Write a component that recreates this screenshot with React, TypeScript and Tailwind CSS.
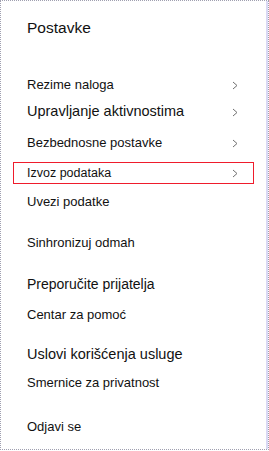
import React from 'react';

interface Item {
    label: string;
    size: string;
    mt: string;
    chevron?: boolean;
    selected?: boolean;
}

const items: Item[] = [
    { label: 'Rezime naloga', size: 'text-[13px]', mt: 'mt-[0px]', chevron: true },
    { label: 'Upravljanje aktivnostima', size: 'text-[14.5px]', mt: 'mt-[5px]', chevron: true },
    { label: 'Bezbednosne postavke', size: 'text-[13px]', mt: 'mt-[9px]', chevron: true },
    { label: 'Izvoz podataka', size: 'text-[12.5px]', mt: 'mt-[8px]', chevron: true, selected: true },
    { label: 'Uvezi podatke', size: 'text-[13px]', mt: 'mt-[7px]' },
    { label: 'Sinhronizuj odmah', size: 'text-[13px]', mt: 'mt-[19px]' },
    { label: 'Preporučite prijatelja', size: 'text-[14px]', mt: 'mt-[19px]' },
    { label: 'Centar za pomoć', size: 'text-[13px]', mt: 'mt-[9px]' },
    { label: 'Uslovi korišćenja usluge', size: 'text-[14.5px]', mt: 'mt-[18px]' },
    { label: 'Smernice za privatnost', size: 'text-[13px]', mt: 'mt-[6px]' },
    { label: 'Odjavi se', size: 'text-[13px]', mt: 'mt-[22px]' },
];

function Chevron() {
    return (
        <svg width="6" height="9" viewBox="0 0 6 9" fill="none">
            <path d="M1 1 L5 4.5 L1 8" stroke="#707070" strokeWidth="1" />
        </svg>
    );
}

export default function App() {
    return (
        <div
            className="w-[269px] h-[451px] bg-white"
            style={{ fontFamily: '"Liberation Sans", Arial, sans-serif' }}
        >
            <div className="flex w-[269px] h-[450px] border border-dotted border-[#a0a0b0]">
                <div className="flex-1 flex flex-col">
                    <h1 className="pl-[26px] mt-[18px] h-[18px] leading-[18px] text-[15.5px] text-[#111]">
                        Postavke
                    </h1>
                    <ul className="mt-[37px] flex flex-col">
                        {items.map((item) => (
                            <li
                                key={item.label}
                                className={`${item.mt} ml-[12px] mr-[12px] h-[22px] flex items-center justify-between pl-[13px] pr-[15px] border ${
                                    item.selected ? 'border-[#ef1c2c]' : 'border-transparent'
                                }`}
                            >
                                <span className={`${item.size} text-[#111]`}>{item.label}</span>
                                {item.chevron && <Chevron />}
                            </li>
                        ))}
                    </ul>
                </div>
                <div className="w-[2px] bg-[#d9d9f5]" />
            </div>
        </div>
    );
}
